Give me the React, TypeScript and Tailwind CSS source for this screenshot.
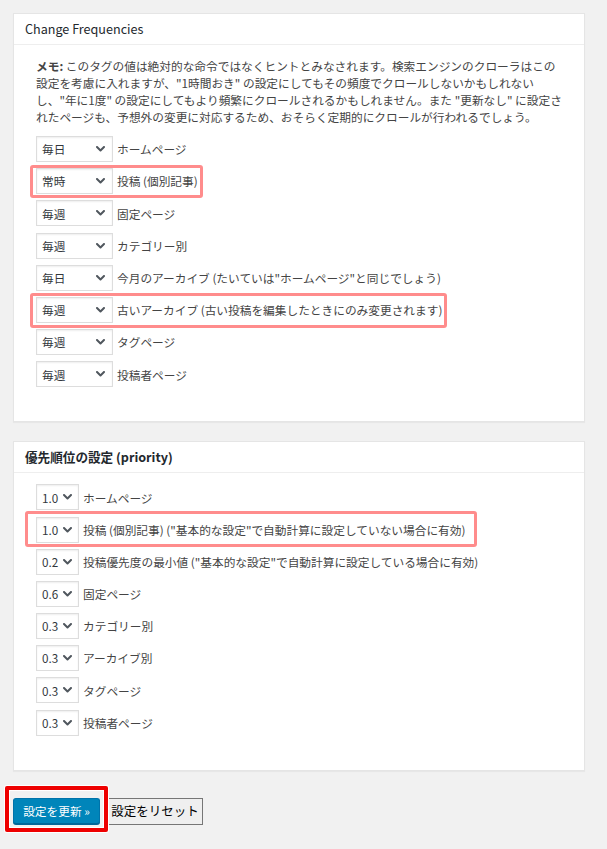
import React from 'react';

type Row = { value: string; label: string; box?: string };

const freqRows: Row[] = [
  { value: '毎日', label: 'ホームページ' },
  { value: '常時', label: '投稿 (個別記事)', box: '-left-[6px] -right-[5px] -top-[3.5px] -bottom-[3.5px]' },
  { value: '毎週', label: '固定ページ' },
  { value: '毎週', label: 'カテゴリー別' },
  { value: '毎日', label: '今月のアーカイブ (たいていは"ホームページ"と同じでしょう)' },
  { value: '毎週', label: '古いアーカイブ (古い投稿を編集したときにのみ変更されます)', box: '-left-[6px] -right-[5px] -top-[3.5px] -bottom-[5px]' },
  { value: '毎週', label: 'タグページ' },
  { value: '毎週', label: '投稿者ページ' },
];

const priorityRows: Row[] = [
  { value: '1.0', label: 'ホームページ' },
  { value: '1.0', label: '投稿 (個別記事) ("基本的な設定"で自動計算に設定していない場合に有効)', box: '-left-[11px] -right-[12px] -top-[5.5px] -bottom-[4.5px]' },
  { value: '0.2', label: '投稿優先度の最小値 ("基本的な設定"で自動計算に設定している場合に有効)' },
  { value: '0.6', label: '固定ページ' },
  { value: '0.3', label: 'カテゴリー別' },
  { value: '0.3', label: 'アーカイブ別' },
  { value: '0.3', label: 'タグページ' },
  { value: '0.3', label: '投稿者ページ' },
];

function Chevron() {
  return (
    <svg width="9" height="6" viewBox="0 0 9 6" className="shrink-0">
      <path d="M1 1l3.5 3.5L8 1" fill="none" stroke="#50575e" strokeWidth="2" strokeLinecap="round" strokeLinejoin="round" />
    </svg>
  );
}

function FakeSelect({ value, wide }: { value: string; wide: boolean }) {
  return (
    <div
      className={`${wide ? 'w-[77px] pl-[5px] pr-[7px]' : 'w-[43px] pl-[5px] pr-[6px]'} h-[26px] shrink-0 flex items-center justify-between border border-[#dddddd] bg-white text-[11.7px] text-[#32373c] shadow-[inset_0_1px_2px_rgba(0,0,0,0.07)]`}
    >
      <span>{value}</span>
      <Chevron />
    </div>
  );
}

function OptionRow({ row, wide }: { row: Row; wide: boolean }) {
  return (
    <div className="flex">
      <div className="relative inline-flex items-center gap-[4px]">
        <FakeSelect value={row.value} wide={wide} />
        <span className="whitespace-nowrap text-[11.7px] text-[#444444]">{row.label}</span>
        {row.box && (
          <span className={`absolute ${row.box} rounded-[3px] border-[3px] border-[#ff8c8c] pointer-events-none`} />
        )}
      </div>
    </div>
  );
}

function Card({ title, bold, children }: { title: string; bold?: boolean; children: React.ReactNode }) {
  return (
    <div className="border border-[#e5e5e5] bg-white shadow-[0_1px_1px_rgba(0,0,0,0.04)]">
      <div className={`h-[31px] border-b border-[#eeeeee] px-[11px] flex items-center text-[12.6px] text-[#23282d] ${bold ? 'font-semibold' : 'font-normal'}`}>
        {title}
      </div>
      {children}
    </div>
  );
}

export default function App() {
  return (
    <div className="min-h-screen bg-[#f1f1f1] pl-[13px] pr-[22px] pt-[13px] pb-[20px] font-['Noto_Sans_CJK_JP','Noto_Sans',sans-serif]">
      <Card title="Change Frequencies">
        <div className="pl-[22px] pt-[11.5px] pb-[34px]">
          <p className="text-[11.7px] leading-[17px] text-[#444444] whitespace-nowrap">
            <strong className="font-bold">メモ:</strong> このタグの値は絶対的な命令ではなくヒントとみなされます。検索エンジンのクローラはこの
            <br />
            設定を考慮に入れますが、"1時間おき" の設定にしてもその頻度でクロールしないかもしれない
            <br />
            し、"年に1度" の設定にしてもより頻繁にクロールされるかもしれません。また "更新なし" に設定さ
            <br />
            れたページも、予想外の変更に対応するため、おそらく定期的にクロールが行われるでしょう。
          </p>
          <div className="mt-[11.5px] flex flex-col gap-[6.2px]">
            {freqRows.map((r, i) => (
              <OptionRow key={i} row={r} wide />
            ))}
          </div>
        </div>
      </Card>

      <div className="mt-[19px]">
        <Card title="優先順位の設定 (priority)" bold>
          <div className="pl-[22px] pt-[11px] pb-[34px] flex flex-col gap-[6.2px]">
            {priorityRows.map((r, i) => (
              <OptionRow key={i} row={r} wide={false} />
            ))}
          </div>
        </Card>
      </div>

      <div className="mt-[27px] flex items-center gap-[7px]">
        <div className="relative">
          <button className="w-[87px] h-[26px] flex items-center justify-center rounded-[3px] border border-[#0073aa] border-b-[#006799] bg-[#0085ba] text-[11.7px] text-white shadow-[0_1px_0_#006799]">
            設定を更新 »
          </button>
          <span className="absolute -left-[8px] -right-[8px] -top-[12.5px] -bottom-[8px] border-[4px] border-[#ee0000] rounded-[2px] shadow-[inset_0_0_0_1px_#ffffff,0_0_0_1px_#ffffff] pointer-events-none" />
        </div>
        <button className="w-[96px] h-[27px] flex items-center justify-center border border-[#767676] bg-[#efefef] text-[12.5px] text-black">
          設定をリセット
        </button>
      </div>
    </div>
  );
}
